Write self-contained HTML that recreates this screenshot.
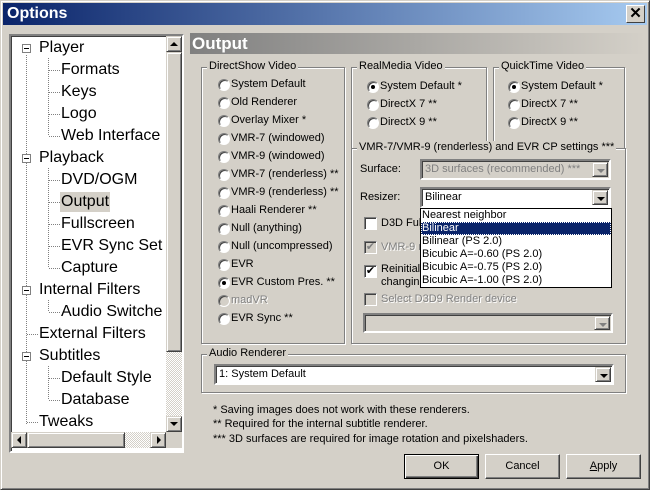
<!DOCTYPE html>
<html><head><style>
*{box-sizing:border-box;margin:0;padding:0}
body{width:650px;height:490px;background:#d4d0c8;font-family:"Liberation Sans",sans-serif;font-size:11px;color:#000;position:relative;overflow:hidden}
.a{position:absolute}
.win{position:absolute;left:0;top:0;width:650px;height:490px;border:1px solid;border-color:#d4d0c8 #404040 #404040 #d4d0c8;box-shadow:inset 1px 1px #fff,inset -1px -1px #808080}
.title{left:3px;top:3px;width:644px;height:22px;background:linear-gradient(90deg,#0a246a,#a6caf0);color:#fff;font:bold 16px "Liberation Sans",sans-serif;padding:2px 4px}
.xb{left:626px;top:5px;width:19px;height:18px;background:#d4d0c8;border:1px solid;border-color:#fff #404040 #404040 #fff;font:bold 15px "Liberation Sans",sans-serif;text-align:center;line-height:15px}
.tree{left:9px;top:34px;width:175px;height:419px;background:#fff;border:2px solid;border-color:#808080 #fff #fff #808080;box-shadow:inset 1px 1px #404040}
.ti{position:absolute;font:16px "Liberation Sans",sans-serif;white-space:nowrap;line-height:20px}
.sb{background:#d4d0c8;border:1px solid;border-color:#d4d0c8 #404040 #404040 #d4d0c8;box-shadow:inset 1px 1px #fff,inset -1px -1px #808080;position:absolute}
.hdr{left:190px;top:33px;width:456px;height:21px;background:linear-gradient(90deg,#808080,#d4d0c8);color:#fff;font:bold 17px "Liberation Sans",sans-serif;padding:0 2px;line-height:21px}
.gb{position:absolute;border:1px solid #808080;box-shadow:1px 1px #fff,inset 1px 1px #fff}
.gl{position:absolute;background:#d4d0c8;padding:0 2px;top:-8px;left:5px;white-space:nowrap}
.r{position:absolute;white-space:nowrap}
.r i{position:absolute;left:-13px;top:1px;width:12px;height:12px;border-radius:50%;background:#fff;border:1px solid;border-color:#808080 #fff #fff #808080;box-shadow:inset 1px 1px #404040}
.r i.on:after{content:"";position:absolute;left:3px;top:3px;width:4px;height:4px;border-radius:50%;background:#000}
.dis{color:#808080;text-shadow:1px 1px #fff}
.cb{position:absolute;width:13px;height:13px;background:#fff;border:1px solid;border-color:#808080 #fff #fff #808080;box-shadow:inset 1px 1px #404040;font-size:11px;line-height:10px;text-align:center}
.combo{position:absolute;background:#fff;border:2px solid;border-color:#808080 #fff #fff #808080;box-shadow:inset 1px 1px #404040;padding:2px 3px;white-space:nowrap}
.combo.d{background:#d4d0c8;color:#808080}
.arr{position:absolute;right:1px;top:1px;width:16px;bottom:1px;background:#d4d0c8;border:1px solid;border-color:#d4d0c8 #404040 #404040 #d4d0c8;box-shadow:inset 1px 1px #fff,inset -1px -1px #808080}
.arr:after{content:"";position:absolute;left:4px;top:6px;border:4px solid transparent;border-top:4px solid #000;border-bottom:0}
.arr.g:after{border-top-color:#808080}
.btn{position:absolute;top:454px;width:75px;height:25px;border:1px solid;border-color:#fff #404040 #404040 #fff;box-shadow:inset -1px -1px #808080;text-align:center;line-height:22px}
.dl{position:absolute;left:420px;top:208px;width:192px;height:80px;background:#fff;border:1px solid #000}
.dl div{height:13px;line-height:13px;padding-left:1px;white-space:nowrap}
</style></head><body>
<div class="win"></div>
<div class="a title">Options</div>
<div class="a xb">✕</div>

<div class="a tree">
<div class="a" style="left:1px;top:2px;width:154px;height:394px;overflow:hidden">
<svg class="a" style="left:0;top:0" width="160" height="400">
<g stroke="#808080" stroke-dasharray="1,1" fill="none">
<line x1="14.5" y1="17" x2="14.5" y2="386"/>
<line x1="36.5" y1="20" x2="36.5" y2="98"/>
<line x1="36.5" y1="130" x2="36.5" y2="230"/>
<line x1="36.5" y1="262" x2="36.5" y2="274"/>
<line x1="36.5" y1="328" x2="36.5" y2="362"/>
<line x1="37" y1="32.5" x2="48" y2="32.5"/><line x1="37" y1="54.5" x2="48" y2="54.5"/><line x1="37" y1="76.5" x2="48" y2="76.5"/><line x1="37" y1="98.5" x2="48" y2="98.5"/>
<line x1="37" y1="142.5" x2="48" y2="142.5"/><line x1="37" y1="164.5" x2="48" y2="164.5"/><line x1="37" y1="186.5" x2="48" y2="186.5"/><line x1="37" y1="208.5" x2="48" y2="208.5"/><line x1="37" y1="230.5" x2="48" y2="230.5"/>
<line x1="37" y1="274.5" x2="48" y2="274.5"/>
<line x1="15" y1="296.5" x2="26" y2="296.5"/>
<line x1="37" y1="340.5" x2="48" y2="340.5"/><line x1="37" y1="362.5" x2="48" y2="362.5"/>
<line x1="15" y1="384.5" x2="26" y2="384.5"/>
</g>
<g fill="#fff" stroke="#808080"><rect x="10.5" y="6.5" width="8" height="8"/><rect x="10.5" y="116.5" width="8" height="8"/><rect x="10.5" y="248.5" width="8" height="8"/><rect x="10.5" y="314.5" width="8" height="8"/></g>
<g stroke="#000"><line x1="12" y1="10.5" x2="17" y2="10.5"/><line x1="12" y1="120.5" x2="17" y2="120.5"/><line x1="12" y1="252.5" x2="17" y2="252.5"/><line x1="12" y1="318.5" x2="17" y2="318.5"/></g>
</svg>
<div class="ti" style="left:27px;top:0">Player</div>
<div class="ti" style="left:49px;top:22px">Formats</div>
<div class="ti" style="left:49px;top:44px">Keys</div>
<div class="ti" style="left:49px;top:66px">Logo</div>
<div class="ti" style="left:49px;top:88px">Web Interface</div>
<div class="ti" style="left:27px;top:110px">Playback</div>
<div class="ti" style="left:49px;top:132px">DVD/OGM</div>
<div class="ti" style="left:48px;top:154px;background:#d4d0c8;padding:0 1px">Output</div>
<div class="ti" style="left:49px;top:176px">Fullscreen</div>
<div class="ti" style="left:49px;top:198px">EVR Sync Set</div>
<div class="ti" style="left:49px;top:220px">Capture</div>
<div class="ti" style="left:27px;top:242px">Internal Filters</div>
<div class="ti" style="left:49px;top:264px">Audio Switche</div>
<div class="ti" style="left:27px;top:286px">External Filters</div>
<div class="ti" style="left:27px;top:308px">Subtitles</div>
<div class="ti" style="left:49px;top:330px">Default Style</div>
<div class="ti" style="left:49px;top:352px">Database</div>
<div class="ti" style="left:27px;top:374px">Tweaks</div>
</div>
<div class="a" style="left:155px;top:0;width:16px;height:396px;background:repeating-conic-gradient(#d4d0c8 0 25%,#fff 0 50%) 0 0/2px 2px"></div>
<div class="sb" style="left:155px;top:0;width:16px;height:16px"><div style="position:absolute;left:3px;top:5px;border:4px solid transparent;border-bottom:4px solid #000;border-top:0"></div></div>
<div class="sb" style="left:155px;top:16px;width:16px;height:300px"></div>
<div class="sb" style="left:155px;top:380px;width:16px;height:16px"><div style="position:absolute;left:3px;top:5px;border:4px solid transparent;border-top:4px solid #000;border-bottom:0"></div></div>
<div class="a" style="left:0;top:396px;width:155px;height:16px;background:repeating-conic-gradient(#d4d0c8 0 25%,#fff 0 50%) 0 0/2px 2px"></div>
<div class="sb" style="left:0;top:396px;width:16px;height:16px"><div style="position:absolute;left:5px;top:3px;border:4px solid transparent;border-right:4px solid #000;border-left:0"></div></div>
<div class="sb" style="left:16px;top:396px;width:98px;height:16px"></div>
<div class="sb" style="left:139px;top:396px;width:16px;height:16px"><div style="position:absolute;left:6px;top:3px;border:4px solid transparent;border-left:4px solid #000;border-right:0"></div></div>
<div class="a" style="left:155px;top:396px;width:16px;height:16px;background:#d4d0c8"></div>
</div>

<div class="a hdr">Output</div>

<div class="gb" style="left:201px;top:67px;width:144px;height:277px"><span class="gl">DirectShow Video</span></div>
<div class="r" style="left:231px;top:78px"><i></i>System Default</div>
<div class="r" style="left:231px;top:96px"><i></i>Old Renderer</div>
<div class="r" style="left:231px;top:114px"><i></i>Overlay Mixer *</div>
<div class="r" style="left:231px;top:132px"><i></i>VMR-7 (windowed)</div>
<div class="r" style="left:231px;top:150px"><i></i>VMR-9 (windowed)</div>
<div class="r" style="left:231px;top:168px"><i></i>VMR-7 (renderless) **</div>
<div class="r" style="left:231px;top:186px"><i></i>VMR-9 (renderless) **</div>
<div class="r" style="left:231px;top:204px"><i></i>Haali Renderer **</div>
<div class="r" style="left:231px;top:222px"><i></i>Null (anything)</div>
<div class="r" style="left:231px;top:240px"><i></i>Null (uncompressed)</div>
<div class="r" style="left:231px;top:258px"><i></i>EVR</div>
<div class="r" style="left:231px;top:276px"><i class="on"></i>EVR Custom Pres. **</div>
<div class="r dis" style="left:231px;top:294px"><i style="background:#d4d0c8"></i>madVR</div>
<div class="r" style="left:231px;top:312px"><i></i>EVR Sync **</div>

<div class="gb" style="left:351px;top:67px;width:136px;height:82px"><span class="gl">RealMedia Video</span></div>
<div class="r" style="left:380px;top:80px"><i class="on"></i>System Default *</div>
<div class="r" style="left:380px;top:98px"><i></i>DirectX 7 **</div>
<div class="r" style="left:380px;top:116px"><i></i>DirectX 9 **</div>

<div class="gb" style="left:493px;top:67px;width:132px;height:82px"><span class="gl">QuickTime Video</span></div>
<div class="r" style="left:521px;top:80px"><i class="on"></i>System Default *</div>
<div class="r" style="left:521px;top:98px"><i></i>DirectX 7 **</div>
<div class="r" style="left:521px;top:116px"><i></i>DirectX 9 **</div>

<div class="gb" style="left:351px;top:148px;width:275px;height:196px"><span class="gl">VMR-7/VMR-9 (renderless) and EVR CP settings ***</span></div>
<div class="r" style="left:360px;top:163px">Surface:</div>
<div class="combo d" style="left:420px;top:159px;width:191px;height:21px">3D surfaces (recommended) ***<div class="arr g"></div></div>
<div class="r" style="left:360px;top:191px">Resizer:</div>
<div class="combo" style="left:420px;top:187px;width:191px;height:21px">Bilinear<div class="arr"></div></div>
<div class="cb" style="left:364px;top:217px"></div><div class="r" style="left:381px;top:217px">D3D Full</div>
<div class="cb" style="left:364px;top:241px;background:#d4d0c8;color:#808080">✔</div><div class="r dis" style="left:381px;top:241px">VMR-9 m</div>
<div class="cb" style="left:364px;top:265px">✔</div><div class="r" style="left:381px;top:263px;line-height:13px">Reinitiali<br>changing</div>
<div class="cb" style="left:364px;top:293px;background:#d4d0c8"></div><div class="r dis" style="left:381px;top:293px">Select D3D9 Render device</div>
<div class="combo d" style="left:363px;top:313px;width:250px;height:20px"><div class="arr g"></div></div>
<div class="dl">
<div>Nearest neighbor</div>
<div style="background:#0a246a;color:#fff;outline:1px dotted #fff;outline-offset:-1px">Bilinear</div>
<div>Bilinear (PS 2.0)</div>
<div>Bicubic A=-0.60 (PS 2.0)</div>
<div>Bicubic A=-0.75 (PS 2.0)</div>
<div>Bicubic A=-1.00 (PS 2.0)</div>
</div>

<div class="gb" style="left:201px;top:354px;width:425px;height:39px"><span class="gl">Audio Renderer</span></div>
<div class="combo" style="left:214px;top:364px;width:400px;height:21px">1: System Default<div class="arr"></div></div>

<div class="r" style="left:213px;top:404px">* Saving images does not work with these renderers.</div>
<div class="r" style="left:213px;top:418px">** Required for the internal subtitle renderer.</div>
<div class="r" style="left:213px;top:433px">*** 3D surfaces are required for image rotation and pixelshaders.</div>

<div class="btn" style="left:404px;border:1px solid #000;box-shadow:inset 1px 1px #fff,inset -1px -1px #404040,inset -2px -2px #808080">OK</div>
<div class="btn" style="left:485px">Cancel</div>
<div class="btn" style="left:566px"><u>A</u>pply</div>
</body></html>
